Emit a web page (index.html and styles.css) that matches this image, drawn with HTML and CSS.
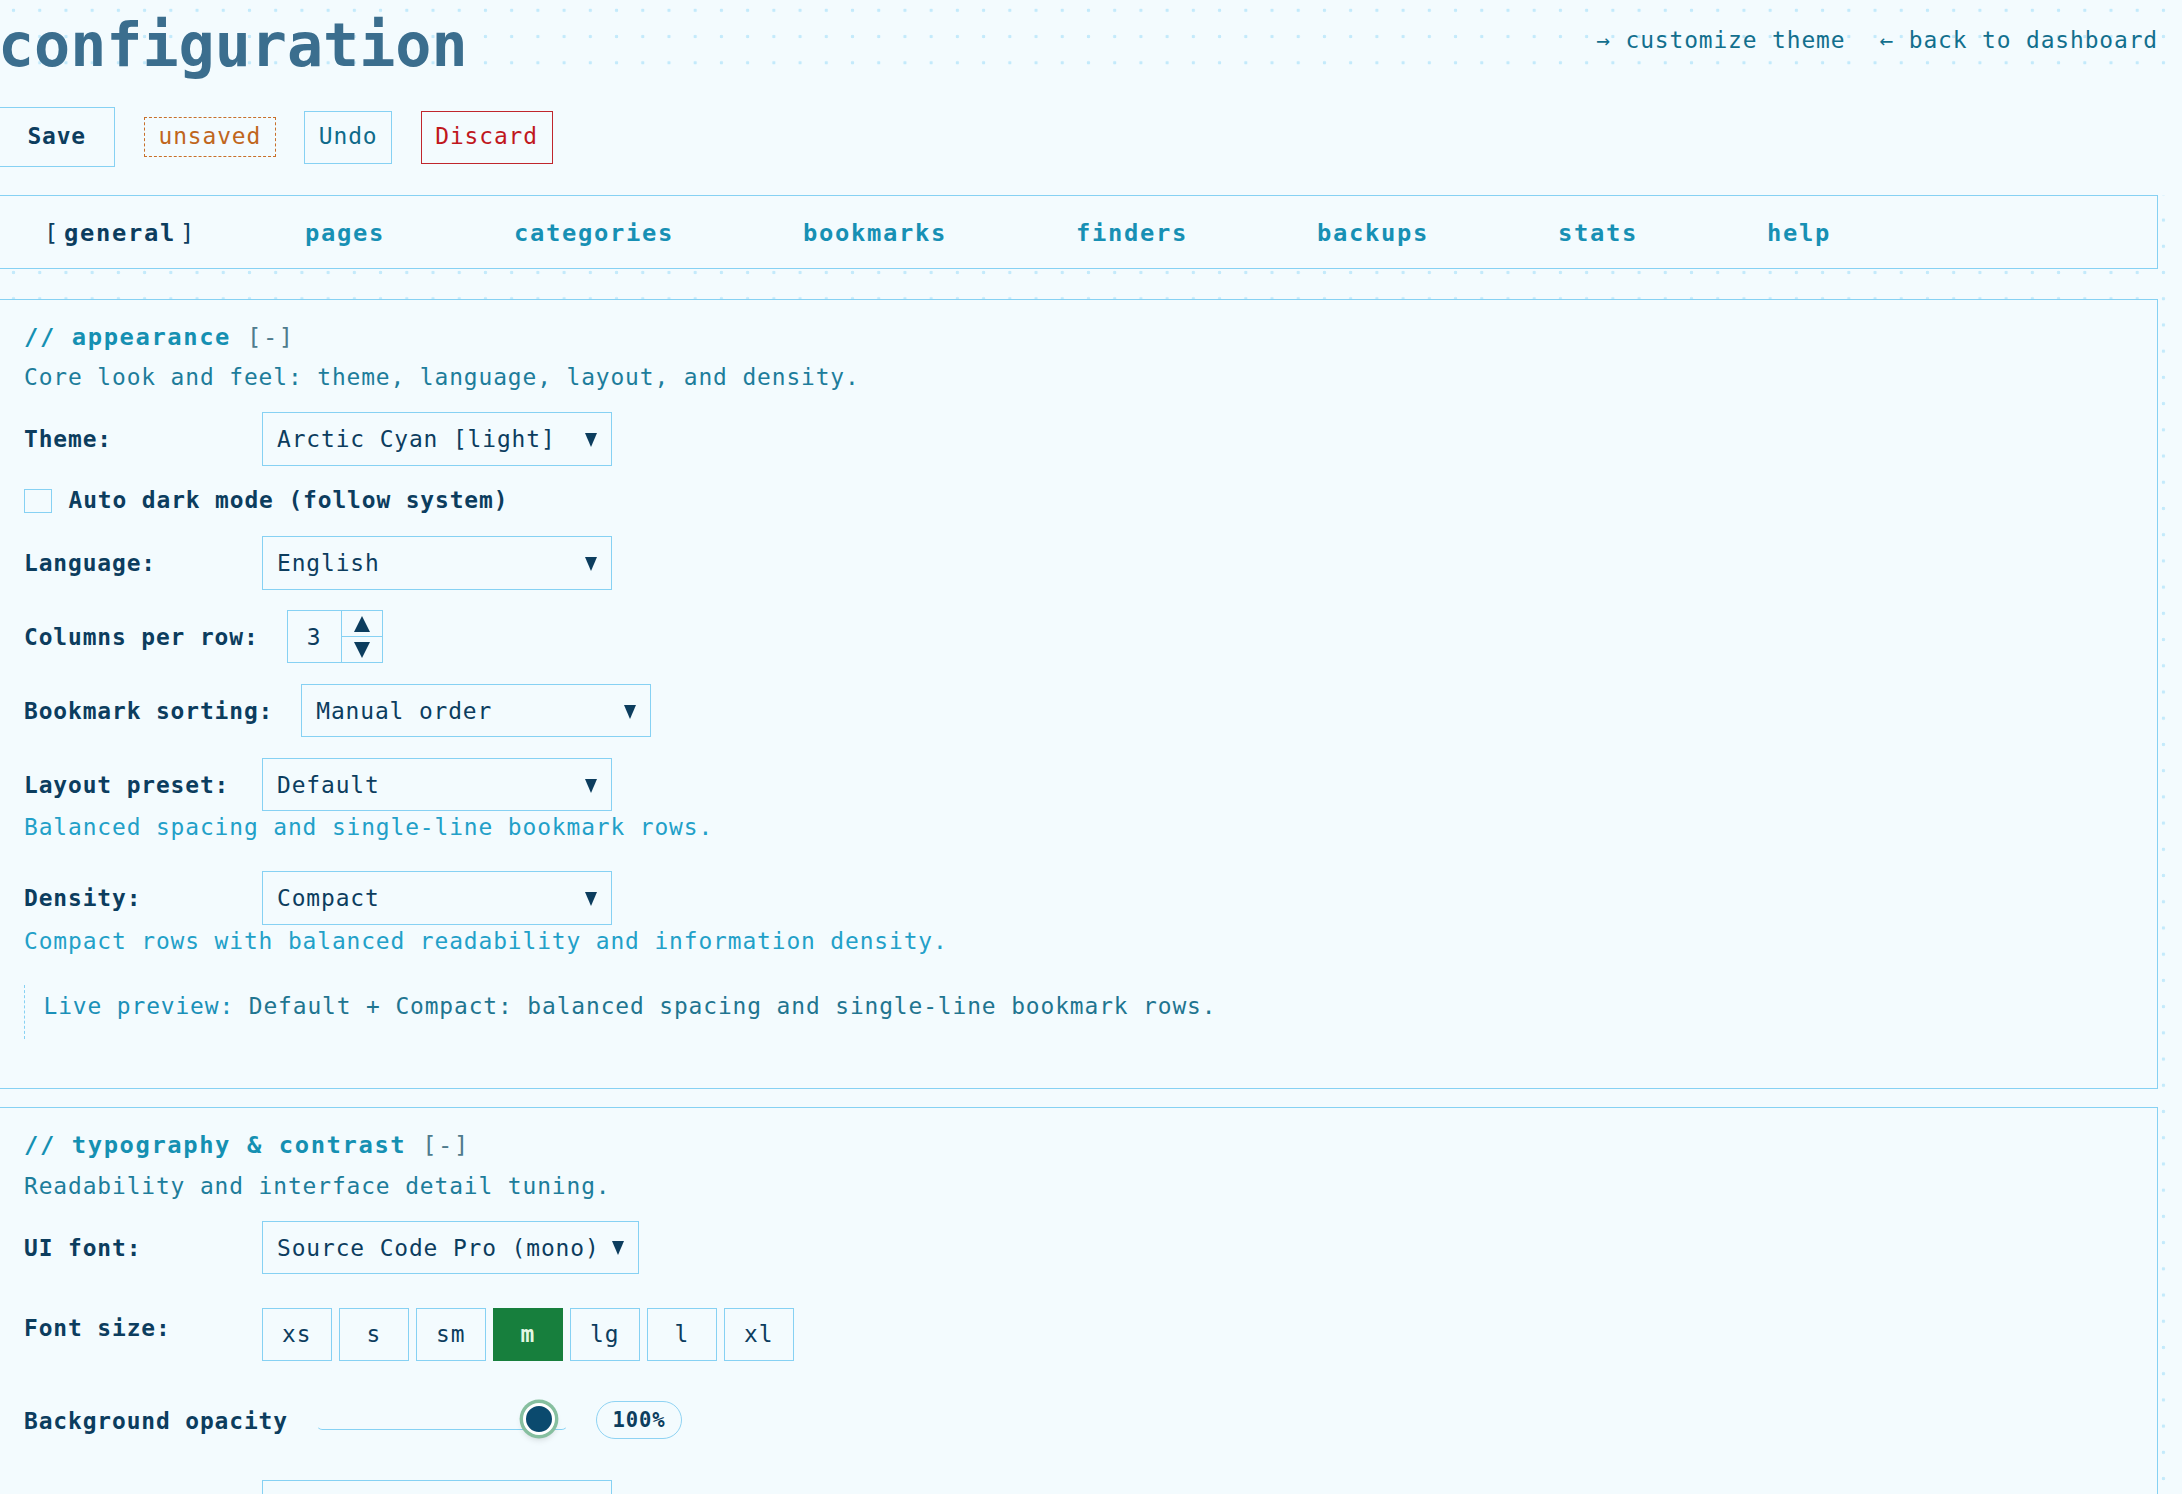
FILE: index.html
```html
<!DOCTYPE html>
<html lang="en">
<head>
    <meta charset="UTF-8">
    <meta name="viewport" content="width=device-width, initial-scale=1.0">
    <title>configuration</title>
    <link rel="stylesheet" href="styles.css">
</head>
<body>
    <header class="page-head">
        <h1 class="title">configuration</h1>
        <nav class="head-links">
            <a href="#">→ customize theme</a>
            <a href="#">← back to dashboard</a>
        </nav>
    </header>

    <!-- save bar -->
    <div class="toolbar">
        <button class="btn btn-save">Save</button>
        <span class="status">unsaved</span>
        <button class="btn">Undo</button>
        <button class="btn btn-danger">Discard</button>
    </div>

    <main class="content">
        <nav class="tabs">
            <a href="#" class="tab active">general</a>
            <a href="#" class="tab">pages</a>
            <a href="#" class="tab">categories</a>
            <a href="#" class="tab">bookmarks</a>
            <a href="#" class="tab">finders</a>
            <a href="#" class="tab">backups</a>
            <a href="#" class="tab">stats</a>
            <a href="#" class="tab">help</a>
        </nav>

        <!-- appearance -->
        <section class="panel">
            <h2 class="panel-title">// appearance <span class="toggle">[-]</span></h2>
            <p class="panel-desc">Core look and feel: theme, language, layout, and density.</p>

            <div class="field">
                <div class="row">
                    <span class="label">Theme:</span>
                    <div class="select">Arctic Cyan [light]</div>
                </div>
            </div>

            <div class="field">
                <label class="check-row">
                    <input type="checkbox" class="check">
                    <span>Auto dark mode (follow system)</span>
                </label>
            </div>

            <div class="field">
                <div class="row">
                    <span class="label">Language:</span>
                    <div class="select">English</div>
                </div>
            </div>

            <div class="field">
                <div class="row">
                    <span class="label">Columns per row:</span>
                    <div class="number">
                        <span class="number-value">3</span>
                        <span class="number-spin">
                            <span class="spin-up"></span>
                            <span class="spin-down"></span>
                        </span>
                    </div>
                </div>
            </div>

            <div class="field">
                <div class="row">
                    <span class="label">Bookmark sorting:</span>
                    <div class="select">Manual order</div>
                </div>
            </div>

            <div class="field">
                <div class="row">
                    <span class="label">Layout preset:</span>
                    <div class="select">Default</div>
                </div>
                <p class="hint">Balanced spacing and single-line bookmark rows.</p>
            </div>

            <div class="field">
                <div class="row">
                    <span class="label">Density:</span>
                    <div class="select">Compact</div>
                </div>
                <p class="hint">Compact rows with balanced readability and information density.</p>
            </div>

            <div class="preview">
                <span class="preview-label">Live preview:</span> Default + Compact: balanced spacing and single-line bookmark rows.
            </div>
        </section>

        <!-- typography -->
        <section class="panel">
            <h2 class="panel-title">// typography &amp; contrast <span class="toggle">[-]</span></h2>
            <p class="panel-desc">Readability and interface detail tuning.</p>

            <div class="field loose">
                <div class="row">
                    <span class="label">UI font:</span>
                    <div class="select">Source Code Pro (mono)</div>
                </div>
            </div>

            <div class="field looser">
                <div class="row row-top">
                    <span class="label">Font size:</span>
                    <div class="sizes">
                        <button class="size">xs</button>
                        <button class="size">s</button>
                        <button class="size">sm</button>
                        <button class="size active">m</button>
                        <button class="size">lg</button>
                        <button class="size">l</button>
                        <button class="size">xl</button>
                    </div>
                </div>
            </div>

            <div class="field looser">
                <div class="row">
                    <span class="label">Background opacity</span>
                    <div class="range">
                        <div class="range-track"></div>
                        <span class="range-thumb"></span>
                    </div>
                    <span class="pill">100%</span>
                </div>
            </div>

            <!-- contrast swatch, continues below the fold -->
            <div class="field">
                <div class="swatch"></div>
            </div>
        </section>
    </main>
</body>
</html>
```

FILE: styles.css
```css
html {
    scrollbar-width: none;
}

html::-webkit-scrollbar {
    display: none;
}

body {
    margin: 0;
    font-family: "DejaVu Sans Mono", "Liberation Mono", monospace;
    font-size: 22.9px;
    letter-spacing: 0.88px;
    line-height: 29.4px;
    color: #0c3d5e;
    background-color: #f3fbfe;
    background-image: radial-gradient(circle, #c3eafb 1.5px, transparent 2px);
    background-size: 26.23px 26.23px;
    background-position: 0.4px -2.8px;
}

a {
    text-decoration: none;
}

/* header */

.page-head {
    display: flex;
    justify-content: space-between;
    align-items: flex-start;
    width: 2160px;
    margin-left: -2px;
    padding-top: 9px;
}

.title {
    margin: 0;
    font-size: 60px;
    letter-spacing: 0;
    line-height: 72px;
    font-weight: 700;
    color: #3b6e8e;
}

.head-links {
    display: flex;
    gap: 34px;
    padding-top: 16.5px;
}

.head-links a {
    color: #126f8d;
}

/* save bar */

.toolbar {
    display: flex;
    align-items: center;
    gap: 28.6px;
    margin-left: -2px;
    padding: 26px 0 28px;
    background-color: #f3fbfe;
}

.btn {
    font: inherit;
    letter-spacing: inherit;
    color: #0e6a8a;
    background: transparent;
    border: 1px solid #86d1f3;
    padding: 10.8px 13.6px;
    cursor: pointer;
}

.btn-save {
    padding: 14.3px 28.4px;
    font-weight: 700;
    color: #0c3d5e;
}

.btn-danger {
    color: #c0171d;
    border-color: #c0262c;
}

.status {
    display: inline-block;
    padding: 4.3px 13.5px;
    border: 1px dashed #c8702a;
    color: #c0661c;
}

/* tabs */

.content {
    width: 2160px;
    margin-left: -2px;
}

.tabs {
    display: flex;
    gap: 129px;
    padding: 21.5px 0 19.5px 65px;
    border: 1px solid #86d1f3;
    margin-bottom: 30px;
    background-color: #f3fbfe;
}

.tab {
    font-size: 23.8px;
    letter-spacing: 1.67px;
    line-height: 30.7px;
    font-weight: 700;
    color: #1790b4;
}

.tab.active {
    color: #0c3d5e;
}

.tab.active::before {
    content: "[";
    font-weight: 400;
    margin-left: -20px;
    margin-right: 4px;
}

.tab.active::after {
    content: "]";
    font-weight: 400;
    margin-left: 4px;
    margin-right: -20px;
}

/* panels */

.panel {
    border: 1px solid #86d1f3;
    padding: 22px 25px 24px;
    margin-bottom: 18.5px;
    background-color: #f3fbfe;
}

.panel-title {
    margin: 0;
    font-size: 23.8px;
    letter-spacing: 1.6px;
    line-height: 31.2px;
    font-weight: 700;
    color: #1590b2;
}

.toggle {
    font-weight: 400;
    color: #4f7b8d;
}

.panel-desc {
    margin: 10.4px 0 19.5px;
    color: #1d7d9b;
}

.field {
    display: flow-root;
    margin-bottom: 20.6px;
}

.field.loose {
    margin-bottom: 34px;
}

.field.looser {
    margin-bottom: 39.5px;
}

.row {
    display: flex;
    align-items: center;
    gap: 28px;
}

.row-top {
    align-items: flex-start;
}

.label {
    min-width: 210px;
    padding-top: 2px;
    font-weight: 700;
}

.row-top .label {
    padding-top: 6.5px;
}

.hint {
    margin: 2px 0 8px;
    color: #22a0c8;
}

.select {
    display: inline-flex;
    align-items: center;
    justify-content: space-between;
    gap: 12px;
    min-width: 350px;
    box-sizing: border-box;
    padding: 12px 14px 10px;
    border: 1px solid #86d1f3;
}

.select::after {
    content: "";
    border-left: 6.5px solid transparent;
    border-right: 6.5px solid transparent;
    border-top: 14px solid #0c3d5e;
}

.swatch {
    width: 350px;
    height: 60px;
    margin-left: 238px;
    box-sizing: border-box;
    border: 1px solid #86d1f3;
}

.check-row {
    display: flex;
    align-items: center;
    gap: 16.5px;
    font-weight: 700;
}

.check {
    appearance: none;
    margin: 0;
    width: 28px;
    height: 24px;
    border: 1px solid #86d1f3;
    background: transparent;
}

.number {
    display: inline-flex;
    height: 53px;
    box-sizing: border-box;
    border: 1px solid #86d1f3;
}

.number-value {
    width: 53px;
    padding-top: 2px;
    display: flex;
    align-items: center;
    justify-content: center;
}

.number-spin {
    width: 40px;
    display: flex;
    flex-direction: column;
    border-left: 1px solid #86d1f3;
}

.spin-up, .spin-down {
    flex: 1;
    display: flex;
    align-items: center;
    justify-content: center;
}

.spin-down {
    border-top: 1px solid #86d1f3;
}

.spin-up::before {
    content: "";
    border-left: 8.25px solid transparent;
    border-right: 8.25px solid transparent;
    border-bottom: 16px solid #0c3d5e;
}

.spin-down::before {
    content: "";
    border-left: 8.25px solid transparent;
    border-right: 8.25px solid transparent;
    border-top: 16px solid #0c3d5e;
}

.preview {
    border-left: 1px dashed #86d1f3;
    padding: 7px 0 17.5px 18.5px;
    margin-bottom: 25px;
    color: #1f7590;
}

.preview-label {
    color: #1a90b8;
}

/* font size buttons */

.sizes {
    display: flex;
    gap: 7.5px;
}

.size {
    font: inherit;
    letter-spacing: inherit;
    color: #0c3d5e;
    width: 69.5px;
    height: 53px;
    box-sizing: border-box;
    border: 1px solid #86d1f3;
    background: transparent;
    padding: 0;
    cursor: pointer;
}

.size.active {
    background-color: #177f3d;
    border-color: #177f3d;
    color: #e2f8e4;
    font-weight: 700;
}

/* opacity slider */

.range {
    position: relative;
    width: 252px;
    height: 40px;
}

.range-track {
    position: absolute;
    left: 0;
    right: 0;
    top: 17px;
    height: 12.5px;
    box-sizing: border-box;
    border: 1px solid transparent;
    border-bottom-color: #86d1f3;
    border-radius: 999px;
}

.range-thumb {
    position: absolute;
    left: 207.4px;
    top: 2.3px;
    width: 32px;
    height: 32px;
    box-sizing: border-box;
    border-radius: 50%;
    background-color: #0b4a6e;
    border: 3px solid #fff;
    box-shadow: 0 0 0 3.4px #86bf9f, 0 4px 7px rgba(0, 0, 0, 0.18);
}

.pill {
    display: flex;
    align-items: center;
    justify-content: center;
    width: 86px;
    height: 38px;
    box-sizing: border-box;
    border: 1px solid #8fd3f3;
    border-radius: 19px;
    font-size: 20.5px;
    letter-spacing: 0.9px;
    font-weight: 700;
}
```
